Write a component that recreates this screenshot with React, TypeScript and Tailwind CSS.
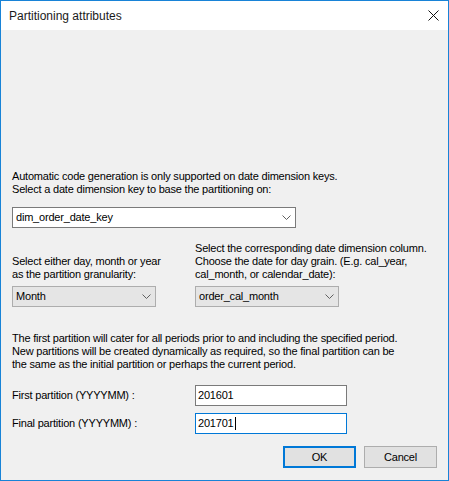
import React from 'react'

const Chevron = () => (
  <svg width="9" height="5" viewBox="0 0 9 5" className="shrink-0">
    <polyline points="0.5,0.5 4.5,4.5 8.5,0.5" fill="none" stroke="#606060" strokeWidth="1" />
  </svg>
)

function Combo({ value, width, disabled }: { value: string; width: string; disabled?: boolean }) {
  return (
    <div
      className={`${width} h-[21px] flex items-center justify-between pl-[3px] pr-[4px] border ${
        disabled ? 'bg-[#e5e5e5] border-[#adadad]' : 'bg-white border-[#7a7a7a]'
      }`}
    >
      <span className="text-[11px] leading-[13px]">{value}</span>
      <Chevron />
    </div>
  )
}

export default function App() {
  return (
    <div className="w-[449px] h-[481px] border border-[#1883d7] flex flex-col font-['Liberation_Sans',Arial,sans-serif] text-black">
      {/* Title bar */}
      <div className="h-[29px] bg-white flex items-center justify-between pl-[8px] pr-[9px]">
        <span className="text-[12px] leading-[14px] text-[#1a1a1a]">Partitioning attributes</span>
        <svg width="11" height="11" viewBox="0 0 11 11">
          <path d="M0.5 0.5 L10.5 10.5 M10.5 0.5 L0.5 10.5" stroke="#111" strokeWidth="1" />
        </svg>
      </div>

      {/* Body */}
      <div className="flex-1 bg-[#f0f0f0] px-[11px] text-[11px] leading-[13px] tracking-[-0.2px]">
        <p className="mt-[140px]">
          Automatic code generation is only supported on date dimension keys.
          <br />
          Select a date dimension key to base the partitioning on:
        </p>

        <div className="mt-[11px]">
          <Combo value="dim_order_date_key" width="w-[284px]" />
        </div>

        <div className="mt-[14px] flex">
          <div className="w-[183px] flex flex-col">
            <p className="mt-[13px]">
              Select either day, month or year
              <br />
              as the partition granularity:
            </p>
            <div className="mt-[5px]">
              <Combo value="Month" width="w-[144px]" disabled />
            </div>
          </div>
          <div className="flex flex-col">
            <p>
              Select the corresponding date dimension column.
              <br />
              Choose the date for day grain. (E.g. cal_year,
              <br />
              cal_month, or calendar_date):
            </p>
            <div className="mt-[5px]">
              <Combo value="order_cal_month" width="w-[144px]" disabled />
            </div>
          </div>
        </div>

        <p className="mt-[25px]">
          The first partition will cater for all periods prior to and including the specified period.
          <br />
          New partitions will be created dynamically as required, so the final partition can be
          <br />
          the same as the initial partition or perhaps the current period.
        </p>

        <div className="mt-[14px] flex items-center">
          <span className="w-[183px]">First partition (YYYYMM) :</span>
          <div className="w-[152px] h-[21px] bg-white border border-[#7a7a7a] flex items-center pl-[2px] text-[11px]">
            201601
          </div>
        </div>
        <div className="mt-[7px] flex items-center">
          <span className="w-[183px]">Final partition (YYYYMM) :</span>
          <div className="w-[152px] h-[21px] bg-white border border-[#0078d7] flex items-center pl-[2px] text-[11px]">
            201701
            <span className="w-px h-[13px] bg-black ml-px" />
          </div>
        </div>

        <div className="mt-[12px] flex justify-end gap-[8px]">
          <button className="w-[73px] h-[22px] bg-[#e1e1e1] border-2 border-[#0078d7] text-[11px] leading-[13px]">
            OK
          </button>
          <button className="w-[73px] h-[22px] bg-[#e1e1e1] border border-[#adadad] text-[11px] leading-[13px]">
            Cancel
          </button>
        </div>
      </div>
    </div>
  )
}
